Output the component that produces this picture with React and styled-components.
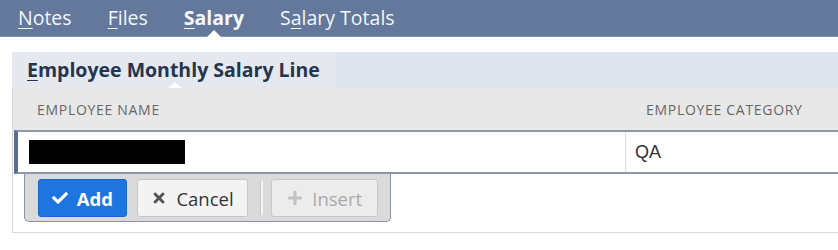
import React from "react";
import styled, { createGlobalStyle } from "styled-components";
import { FaCheck, FaTimes, FaPlus } from "react-icons/fa";

const GlobalStyle = createGlobalStyle`
  body {
    margin: 0;
    background: #ffffff;
    font-family: "Open Sans", "Noto Sans", sans-serif;
  }
`;

const TabBar = styled.nav`
  height: 36px;
  background: #63789b;
  border-bottom: 1px solid #8391aa;
  display: flex;
  align-items: center;
  gap: 36px;
  padding-left: 18px;
`;

const Tab = styled.span`
  position: relative;
  height: 36px;
  line-height: 36px;
  color: #f4f6fa;
  font-size: 19.5px;
  font-weight: ${(p) => (p.$active ? 700 : 400)};

  u {
    text-decoration-thickness: 1px;
    text-underline-offset: 3px;
  }

  &::after {
    content: "";
    display: ${(p) => (p.$active ? "block" : "none")};
    position: absolute;
    left: 50%;
    bottom: -1px;
    margin-left: -7px;
    border-left: 7px solid transparent;
    border-right: 7px solid transparent;
    border-bottom: 7px solid #ffffff;
  }
`;

const Section = styled.section`
  padding: 15px 0 0 12px;
`;

const SubtabBar = styled.div`
  height: 36px;
  background: #dfe4ee;
  display: flex;
`;

const Subtab = styled.div`
  position: relative;
  width: 324px;
  box-sizing: border-box;
  padding-left: 15px;
  background: #e5e8ee;
  color: #24354f;
  font-size: 19.5px;
  font-weight: 700;
  line-height: 36px;
  white-space: nowrap;

  u {
    text-decoration-thickness: 1px;
    text-underline-offset: 3px;
  }

  &::after {
    content: "";
    position: absolute;
    left: 156px;
    bottom: 0;
    border-left: 7px solid transparent;
    border-right: 7px solid transparent;
    border-bottom: 6px solid #ffffff;
  }
`;

const Table = styled.div`
  border-left: 1px solid #d4d4d4;
  border-bottom: 1px solid #d9d9d9;
  height: 145px;
  box-sizing: border-box;
`;

const HeaderRow = styled.div`
  display: grid;
  grid-template-columns: 611px 1fr;
  height: 42px;
  background: #e8e8e8;
  align-items: center;
`;

const HeaderCell = styled.div`
  padding-left: ${(p) => p.$pad}px;
  color: #676767;
  font-size: 14px;
  letter-spacing: 0.7px;
  text-transform: uppercase;
`;

const DataRow = styled.div`
  display: grid;
  grid-template-columns: 607px 1fr;
  height: 40px;
  margin-left: 1px;
  background: #ffffff;
  border-top: 2px solid #8e97a8;
  border-bottom: 2px solid #8e97a8;
  border-left: 4px solid #5b6e90;
`;

const NameCell = styled.div`
  display: flex;
  align-items: center;
  padding-left: 11px;
`;

const Redacted = styled.div`
  width: 156px;
  height: 24px;
  background: #000000;
`;

const CategoryCell = styled.div`
  display: flex;
  align-items: center;
  padding-left: 9px;
  border-left: 1px solid #dcdcdc;
  color: #333333;
  font-family: "Liberation Sans", Arial, sans-serif;
  font-size: 18px;
`;

const ButtonBar = styled.div`
  display: flex;
  align-items: flex-start;
  width: 367px;
  height: 48px;
  box-sizing: border-box;
  margin-left: 11px;
  padding: 5px 12px 0 13px;
  background: #dadada;
  border: 1px solid #8a93a3;
  border-top: none;
  border-radius: 0 0 5px 5px;
`;

const Button = styled.button`
  display: flex;
  align-items: center;
  justify-content: center;
  gap: 9px;
  width: ${(p) => p.$w}px;
  height: 38px;
  margin-right: ${(p) => p.$mr || 0}px;
  padding: 0;
  border-radius: 3px;
  border: 1px solid ${(p) => (p.$primary ? "#1666c9" : "#c8c8c8")};
  background: ${(p) => (p.$primary ? "#1f75e0" : p.disabled ? "#ececec" : "#f3f3f3")};
  color: ${(p) => (p.$primary ? "#ffffff" : p.disabled ? "#a9a9a9" : "#333333")};
  font-family: "Open Sans", sans-serif;
  font-size: 18.5px;
  font-weight: ${(p) => (p.$primary ? 700 : 400)};

  svg {
    font-size: 16px;
    color: ${(p) => (p.$primary ? "#ffffff" : p.disabled ? "#c2c2c2" : "#555555")};
  }
`;

const Separator = styled.div`
  width: 2px;
  height: 34px;
  margin: 2px 8px 0 0;
  background: #f5f5f5;
  border-left: 1px solid #c4c4c4;
`;

export default function App() {
  return (
    <>
      <GlobalStyle />
      <TabBar>
        <Tab><u>N</u>otes</Tab>
        <Tab><u>F</u>iles</Tab>
        <Tab $active><u>S</u>alary</Tab>
        <Tab>S<u>a</u>lary Totals</Tab>
      </TabBar>
      <Section>
        <SubtabBar>
          <Subtab><u>E</u>mployee Monthly Salary Line</Subtab>
        </SubtabBar>
        <Table>
          <HeaderRow>
            <HeaderCell $pad={24}>Employee Name</HeaderCell>
            <HeaderCell $pad={22}>Employee Category</HeaderCell>
          </HeaderRow>
          <DataRow>
            <NameCell>
              <Redacted />
            </NameCell>
            <CategoryCell>QA</CategoryCell>
          </DataRow>
          <ButtonBar>
            <Button $primary $w={89} $mr={10}>
              <FaCheck /> Add
            </Button>
            <Button $w={112} $mr={12}>
              <FaTimes /> Cancel
            </Button>
            <Separator />
            <Button disabled $w={107}>
              <FaPlus /> Insert
            </Button>
          </ButtonBar>
        </Table>
      </Section>
    </>
  );
}
